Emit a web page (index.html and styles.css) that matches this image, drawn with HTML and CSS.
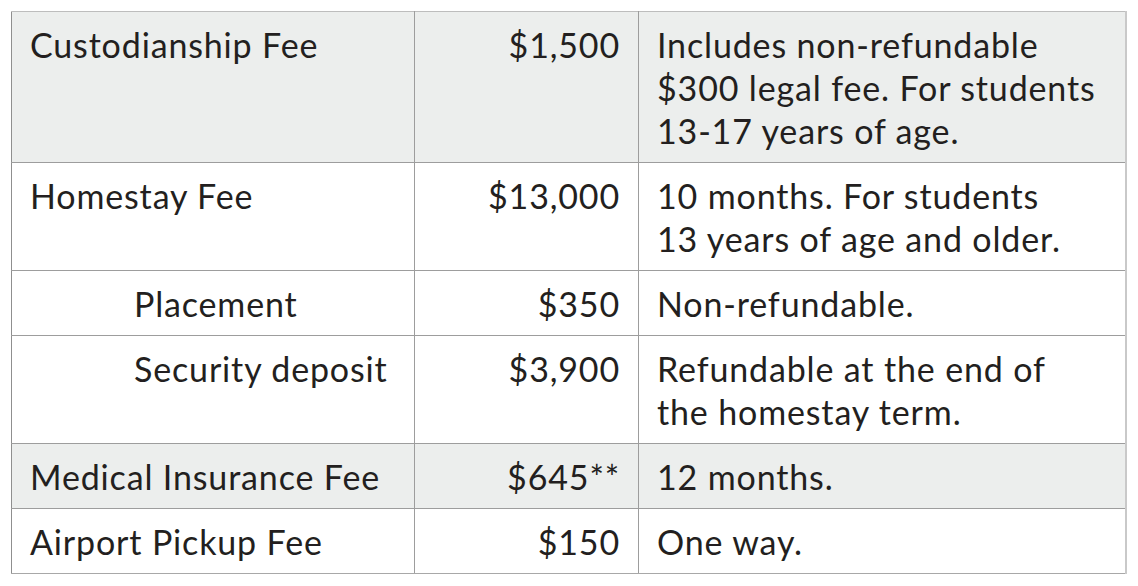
FILE: index.html
```html
<!DOCTYPE html>
<html lang="en">
<head>
<meta charset="utf-8">
<title>Fees</title>
<link rel="stylesheet" href="styles.css">
</head>
<body>
<table class="fees">
  <colgroup>
    <col class="c-name">
    <col class="c-amt">
    <col class="c-note">
  </colgroup>
  <tbody>
    <tr class="shaded">
      <td class="name">Custodianship Fee</td>
      <td class="amt">$1,500</td>
      <td class="note">Includes non-refundable<br>$300 legal fee. For students<br>13-17 years of age.</td>
    </tr>
    <tr>
      <td class="name">Homestay Fee</td>
      <td class="amt">$13,000</td>
      <td class="note">10 months. For students<br>13 years of age and older.</td>
    </tr>
    <tr>
      <td class="name sub">Placement</td>
      <td class="amt">$350</td>
      <td class="note">Non-refundable.</td>
    </tr>
    <tr>
      <td class="name sub">Security deposit</td>
      <td class="amt">$3,900</td>
      <td class="note">Refundable at the end of<br>the homestay term.</td>
    </tr>
    <tr class="shaded">
      <td class="name">Medical Insurance Fee</td>
      <td class="amt">$645**</td>
      <td class="note">12 months.</td>
    </tr>
    <tr>
      <td class="name">Airport Pickup Fee</td>
      <td class="amt">$150</td>
      <td class="note">One way.</td>
    </tr>
  </tbody>
</table>
</body>
</html>
```
FILE: styles.css
```css
html, body {
  margin: 0;
  padding: 0;
  background: #ffffff;
}
body {
  padding: 11px 0 0 11px;
  font-family: Lato, "Noto Sans", sans-serif;
  color: #231f20;
}
.fees {
  border-collapse: collapse;
  width: 1114px;
  table-layout: fixed;
  font-size: 34px;
  line-height: 43px;
  letter-spacing: 0.85px;
}
.c-name { width: 403px; }
.c-amt { width: 224px; }
.c-note { width: 487px; }
.fees td {
  border: 1px solid #9d9d9d;
  padding: 11px 18px 10px 18px;
  vertical-align: top;
}
.fees tr:first-child td {
  border-top: 1px solid #bdbdbd;
}
.fees td.note {
  border-right: 2px solid #c9c9c9;
}
.fees tr:last-child td {
  border-bottom: 1px solid #a8a8a8;
}
.fees td.name {
  border-left: 1px solid #8f8f8f;
}
.shaded td {
  background: #eceeed;
}
.amt {
  text-align: right;
}
.name.sub {
  padding-left: 122px;
}
```
